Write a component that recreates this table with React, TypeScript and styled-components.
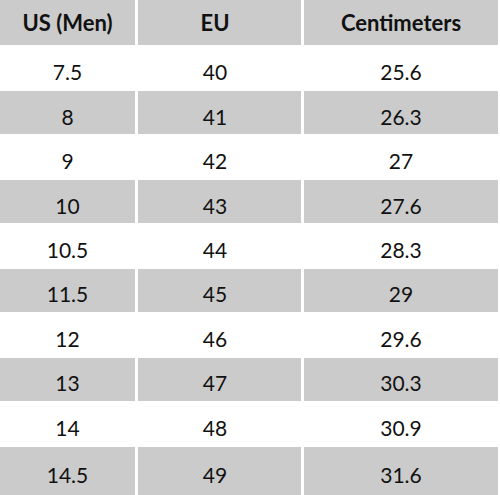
import styled, { createGlobalStyle } from "styled-components";

type Row = [string, string, string];

const rows: Row[] = [
  ["7.5", "40", "25.6"],
  ["8", "41", "26.3"],
  ["9", "42", "27"],
  ["10", "43", "27.6"],
  ["10.5", "44", "28.3"],
  ["11.5", "45", "29"],
  ["12", "46", "29.6"],
  ["13", "47", "30.3"],
  ["14", "48", "30.9"],
  ["14.5", "49", "31.6"],
];

const GlobalStyle = createGlobalStyle`
  html, body {
    margin: 0;
    padding: 0;
    background: #ffffff;
  }
  body {
    font-family: Lato, "Open Sans", sans-serif;
    color: #111111;
  }
`;

const Table = styled.div`
  width: 498px;
  height: 495px;
  display: grid;
  grid-template-columns: 135px 163px 194px;
  grid-template-rows: 45px repeat(9, 1fr) 48px;
  column-gap: 3px;
  row-gap: 2px;
  background: #ffffff;
`;

const Cell = styled.div<{ $shaded: boolean; $header?: boolean; $nudge?: number }>`
  display: flex;
  align-items: center;
  justify-content: center;
  background: ${({ $shaded }) => ($shaded ? "#cbcbcb" : "#ffffff")};
  font-size: ${({ $header }) => ($header ? "22px" : "21px")};
  font-weight: ${({ $header }) => ($header ? 700 : 400)};
  padding-top: ${({ $header }) => ($header ? "0" : "7px")};
  padding-right: ${({ $nudge }) => ($nudge ? `${$nudge}px` : "0")};
  box-sizing: border-box;
  white-space: nowrap;
`;

const headers = ["US (Men)", "EU", "Centimeters"];
const nudges = [0, 9, 0];

export default function App() {
  return (
    <>
      <GlobalStyle />
      <Table>
        {headers.map((h, i) => (
          <Cell key={h} $shaded $header $nudge={nudges[i]}>
            {h}
          </Cell>
        ))}
        {rows.map((row, r) =>
          row.map((value, c) => (
            <Cell key={`${r}-${c}`} $shaded={r % 2 === 1} $nudge={nudges[c]}>
              {value}
            </Cell>
          ))
        )}
      </Table>
    </>
  );
}
